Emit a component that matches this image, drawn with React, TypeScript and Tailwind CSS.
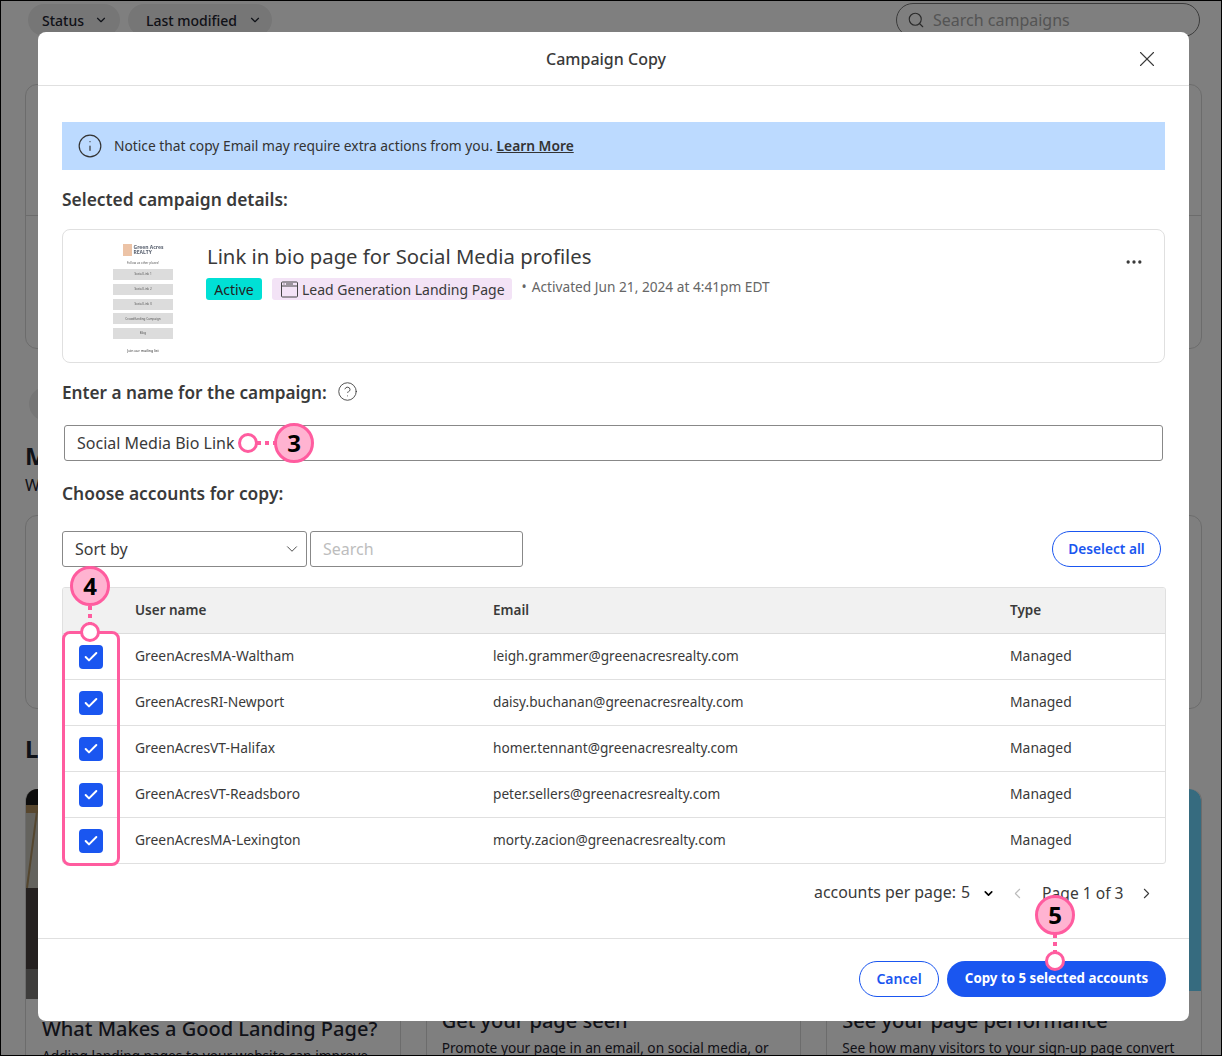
import { Check, ChevronDown, ChevronLeft, ChevronRight, CircleHelp, Ellipsis, Info, Search, X } from 'lucide-react';

const accounts = [
  { name: 'GreenAcresMA-Waltham', email: 'leigh.grammer@greenacresrealty.com' },
  { name: 'GreenAcresRI-Newport', email: 'daisy.buchanan@greenacresrealty.com' },
  { name: 'GreenAcresVT-Halifax', email: 'homer.tennant@greenacresrealty.com' },
  { name: 'GreenAcresVT-Readsboro', email: 'peter.sellers@greenacresrealty.com' },
  { name: 'GreenAcresMA-Lexington', email: 'morty.zacion@greenacresrealty.com' },
];

const thumbLinks = ['Social Link 1', 'Social Link 2', 'Social Link 3', 'Crowdfunding Campaign', 'Blog'];

function PageBehind() {
  return (
    <div className="flex h-full flex-col overflow-hidden bg-white pr-[19px] pl-6 text-[#1f2430]">
      <div className="flex h-[36px] shrink-0 items-center justify-between pt-[2px]">
        <div className="flex gap-2 pl-[3px] text-[14px] font-medium">
          <div className="flex h-[32px] w-[92px] items-center gap-[10px] rounded-full bg-[#ececec] pl-[14px]">
            Status <ChevronDown size={14} />
          </div>
          <div className="flex h-[32px] w-[144px] items-center gap-[11px] rounded-full bg-[#ececec] pl-[18px]">
            Last modified <ChevronDown size={14} />
          </div>
        </div>
        <div className="mr-[2px] flex h-[34px] w-[304px] items-center gap-2 rounded-full border border-[#777] px-[10px] text-[16px] text-[#a8a8a8]">
          <Search className="text-[#555]" size={18} strokeWidth={1.5} /> Search campaigns
        </div>
      </div>
      <div className="mt-[47px] flex h-[265px] shrink-0 flex-col rounded-xl border border-[#d8d8d8]">
        <div className="h-[131px] border-b border-[#d8d8d8]" />
      </div>
      <div className="mt-[38px] ml-[4px] h-[34px] w-[34px] shrink-0 rounded-full bg-[#ececec]" />
      <div className="mt-[20px] text-[24px] leading-[30px] font-bold">M</div>
      <div className="mt-[3px] text-[16px] leading-[22px]">W</div>
      <div className="mt-[19px] h-[194px] shrink-0 rounded-xl border border-[#d8d8d8]" />
      <div className="mt-[25px] text-[24px] leading-[30px] font-bold">L</div>
      <div className="mt-[25px] grid shrink-0 grid-cols-3 gap-[25px]">
        <div className="h-[270px] overflow-hidden rounded-t-xl border-x border-[#d8d8d8]">
          <svg className="-ml-px block" width="376" height="210" viewBox="0 0 376 210">
            <rect width="376" height="210" fill="#c9c6bd" />
            <rect width="376" height="16" fill="#1b1b1b" />
            <rect y="16" width="376" height="8" fill="#b08f5c" />
            <path d="M12 22 2 99" stroke="#a98d5e" strokeWidth="2" />
            <rect y="99" width="376" height="81" fill="#4a4341" />
            <rect y="180" width="376" height="30" fill="#7c7a78" />
          </svg>
          <div className="px-4 pt-[17px] text-[20px] leading-[26px] font-medium">What Makes a Good Landing Page?</div>
          <div className="px-4 pt-[4px] text-[13.7px] leading-[20px]">Adding landing pages to your website can improve</div>
        </div>
        <div className="h-[270px] overflow-hidden rounded-t-xl border-x border-[#d8d8d8]">
          <div className="h-[202px] bg-[#e5e5e5]" />
          <div className="pt-[17px] pl-[15px] text-[20px] leading-[26px] font-medium">Get your page seen</div>
          <div className="pt-[4px] pl-[15px] text-[13.7px] leading-[20px]">Promote your page in an email, on social media, or</div>
        </div>
        <div className="h-[270px] overflow-hidden rounded-t-xl border-x border-[#d8d8d8]">
          <div className="h-[202px] rounded-t-xl bg-[#6cd6ff]" />
          <div className="pt-[17px] pl-[15px] text-[20px] leading-[26px] font-medium">See your page performance</div>
          <div className="pt-[4px] pl-[15px] text-[13.7px] leading-[20px]">See how many visitors to your sign-up page convert</div>
        </div>
      </div>
    </div>
  );
}

function Thumbnail() {
  return (
    <div className="flex w-[100px] shrink-0 flex-col items-center text-[#555] blur-[0.3px]">
      <div className="flex h-[14px] items-center gap-[2px]">
        <div className="h-[12px] w-[9px] bg-[#ecc3a6]" />
        <div className="text-[5px] leading-[5px] font-bold text-[#5a6270]">Green Acres<br />REALTY</div>
      </div>
      <div className="mt-[3px] text-[3px] leading-[6px]">Follow us other places!</div>
      <div className="mt-[3px] flex w-[60px] flex-col gap-[3.8px]">
        {thumbLinks.map((link) => (
          <div key={link} className="flex h-[11px] items-center justify-center bg-[#dcdcdc] text-[3px]">{link}</div>
        ))}
      </div>
      <div className="mt-[9px] text-[3.5px] leading-[6px] text-[#333]">Join our mailing list</div>
    </div>
  );
}

function Marker({ label, className }: { label: string; className: string }) {
  return (
    <div className={`absolute z-20 flex size-[40px] items-center justify-center rounded-full border-[3px] border-[#ff5c9f] bg-[#ffb3d1] text-[24px] font-bold text-black ${className}`}>
      {label}
    </div>
  );
}

function Dot({ className }: { className: string }) {
  return <div className={`absolute z-20 size-[20px] rounded-full border-[3px] border-[#ff5c9f] bg-white ${className}`} />;
}

function Leader({ className }: { className: string }) {
  return (
    <div className={`absolute z-10 flex gap-[4px] ${className}`}>
      <div className="size-[4px] bg-[#ff5c9f]" />
      <div className="size-[4px] bg-[#ff5c9f]" />
      <div className="size-[4px] bg-[#ff5c9f]" />
    </div>
  );
}

export default function App() {
  return (
    <div className="relative h-[1056px] w-[1222px] overflow-hidden border border-black font-['Noto_Sans',sans-serif]">
      <PageBehind />
      <div className="absolute inset-0 bg-black/50" />

      <div className="absolute top-[31px] left-[37px] flex h-[989px] w-[1151px] flex-col rounded-lg bg-white text-[#3a3a3a]">
        <div className="relative flex h-[54px] shrink-0 items-center justify-center border-b border-[#e0e0e0] pr-[15px] text-[16px] font-medium">
          Campaign Copy
          <X className="absolute top-[14px] right-[29px]" size={26} strokeWidth={1} />
        </div>

        <div className="flex flex-1 flex-col px-6 pt-9">
          <div className="flex h-[48px] items-center gap-[11px] bg-[#bcdaff] pl-[15px] text-[13.8px] text-[#333]">
            <Info size={26} strokeWidth={1.1} />
            <span>
              Notice that copy Email may require extra actions from you.{' '}
              <a className="font-semibold underline">Learn More</a>
            </span>
          </div>

          <div className="mt-[17px] text-[17.4px] leading-[24px] font-semibold">Selected campaign details:</div>

          <div className="mt-[18px] flex h-[134px] gap-[14px] rounded-lg border border-[#e0e0e0] pt-[13px] pl-[30px]">
            <Thumbnail />
            <div className="flex-1">
              <div className="text-[20.3px] leading-[26px] font-normal">Link in bio page for Social Media profiles</div>
              <div className="mt-[9px] -ml-px flex items-center gap-[10px] text-[14px]">
                <span className="flex h-[22px] w-[56px] items-center justify-center rounded-[3px] bg-[#00e0d5] text-[#222]">Active</span>
                <span className="flex h-[22px] items-center gap-[4px] rounded-[3px] bg-[#f3e3f6] pr-[7px] pl-[9px]">
                  <svg width="17" height="17" viewBox="0 0 17 17" fill="none" stroke="#444" strokeWidth="1">
                    <rect x="0.5" y="1" width="16" height="15" rx="1" />
                    <path d="M0.5 5h16M2.5 3h1M5 3h7" />
                  </svg>
                  Lead Generation Landing Page
                </span>
                <span className="-mt-[3px] flex gap-[5px] text-[13.7px] text-[#666]"><span>•</span> Activated Jun 21, 2024 at 4:41pm EDT</span>
              </div>
            </div>
            <Ellipsis className="mt-[9px] mr-[20px]" size={20} />
          </div>

          <div className="mt-[18px] flex items-center gap-[10px] text-[17.2px] leading-[24px] font-semibold">
            Enter a name for the campaign:
            <CircleHelp className="-mt-[3px]" size={21} strokeWidth={1} />
          </div>

          <div className="mx-[2px] mt-[20px] flex h-[36px] items-center rounded-[3px] border border-[#888] pl-[12px] text-[16px]">
            Social Media Bio Link
          </div>

          <div className="mt-[20px] text-[17.4px] leading-[24px] font-semibold">Choose accounts for copy:</div>

          <div className="mt-[26px] flex h-[36px] gap-[3px] text-[16px]">
            <div className="flex w-[245px] items-center justify-between rounded-[3px] border border-[#888] pr-[5px] pl-[12px]">
              Sort by <ChevronDown size={18} strokeWidth={1.2} />
            </div>
            <div className="flex w-[213px] items-center rounded-[3px] border border-[#888] pl-[12px] text-[#bdbdbd]">Search</div>
            <div className="mr-[4px] ml-auto flex w-[109px] items-center justify-center rounded-full border border-[#1a56f0] pt-px text-[13.7px] font-semibold text-[#1a56f0]">
              Deselect all
            </div>
          </div>

          <div className="mt-[20px] -mr-px overflow-hidden rounded-[3px] border border-[#e0e0e0] text-[13.9px] leading-[20px]">
            <div className="grid h-[46px] grid-cols-[72px_358px_517px_1fr] items-center border-b border-[#dcdcdc] bg-[#f1f1f1] pb-[2px] text-[13.5px] font-semibold">
              <div />
              <div>User name</div>
              <div>Email</div>
              <div>Type</div>
            </div>
            {accounts.map((account, i) => (
              <div key={account.name} className={`grid grid-cols-[72px_358px_517px_1fr] items-center ${i < accounts.length - 1 ? 'h-[46px] border-b border-[#e0e0e0]' : 'h-[45px]'}`}>
                <div className="flex justify-center">
                  <div className="ml-[-16px] flex size-[24px] items-center justify-center rounded-[4px] bg-[#1a56f0]">
                    <Check className="text-white" size={16} strokeWidth={3} />
                  </div>
                </div>
                <div className="-mt-[2px] text-[13.85px]">{account.name}</div>
                <div className="-mt-[2px] text-[13.65px]">{account.email}</div>
                <div className="-mt-[2px]">Managed</div>
              </div>
            ))}
          </div>

          <div className="mt-[17px] flex h-[24px] items-center text-[15.9px]">
            <span className="ml-[752px]">accounts per page:</span>
            <span className="ml-[5px]">5</span>
            <ChevronDown className="ml-[12px] text-black" size={13} strokeWidth={3} />
            <ChevronLeft className="ml-[14px] text-[#bbb]" size={17} strokeWidth={1.5} />
            <span className="ml-[16px] pt-[2px] text-[15.6px]">Page 1 of 3</span>
            <ChevronRight className="ml-[15px]" size={17} strokeWidth={1.5} />
          </div>
        </div>

        <div className="flex h-[83px] shrink-0 items-start justify-end gap-2 border-t border-[#e0e0e0] pt-[22px] pr-[23px]">
          <button className="flex h-[36px] w-[80px] items-center justify-center rounded-full border border-[#1a56f0] pb-px text-[14px] font-semibold text-[#1a56f0]">Cancel</button>
          <button className="flex h-[36px] w-[219px] items-center justify-center rounded-full bg-[#1a56f0] text-[13.3px] font-bold text-white">Copy to 5 selected accounts</button>
        </div>
      </div>

      {/* callouts over the dialog */}
      <Marker label="3" className="top-[422px] left-[273px]" />
      <Leader className="top-[440px] left-[256px]" />
      <Dot className="top-[432px] left-[237px]" />

      <Marker label="4" className="top-[565px] left-[69px]" />
      <Leader className="top-[605px] left-[87px] flex-col" />
      <Dot className="top-[621px] left-[79px]" />
      <div className="absolute top-[630px] left-[61px] z-10 h-[235px] w-[58px] rounded-lg border-[3px] border-[#ff5c9f]" />

      <Marker label="5" className="top-[894px] left-[1034px]" />
      <Leader className="top-[933px] left-[1052px] flex-col" />
      <Dot className="top-[950px] left-[1044px]" />
    </div>
  );
}
